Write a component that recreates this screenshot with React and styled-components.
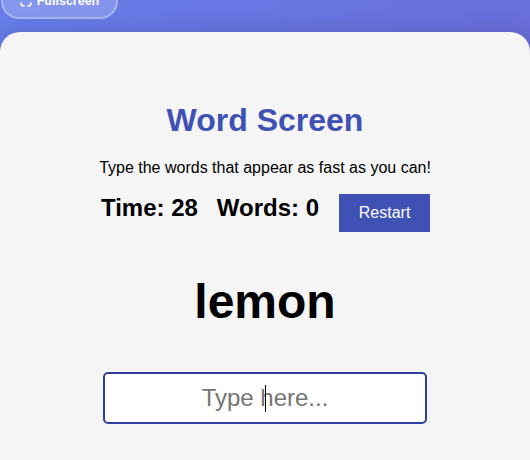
import React from 'react'
import styled, { createGlobalStyle } from 'styled-components'

const GlobalStyle = createGlobalStyle`
  html, body {
    margin: 0;
    padding: 0;
    height: 460px;
    overflow: hidden;
    font-family: "Liberation Sans", Arial, sans-serif;
  }
`

const Page = styled.div`
  width: 530px;
  height: 460px;
  overflow: hidden;
  display: flex;
  flex-direction: column;
  background: linear-gradient(135deg, #667eea 0%, #6a70dc 53%, #6e62cc 100%);
`

const TopBar = styled.div`
  height: 32px;
  flex-shrink: 0;
  overflow: hidden;
  display: flex;
  align-items: flex-end;
  padding: 0 0 13px 1px;
  box-sizing: border-box;
`

const FullscreenButton = styled.button`
  flex-shrink: 0;
  width: 117px;
  height: 36px;
  display: flex;
  align-items: center;
  justify-content: center;
  gap: 5px;
  padding: 0;
  background: rgba(255, 255, 255, 0.2);
  border: 2px solid rgba(255, 255, 255, 0.3);
  border-radius: 20px;
  color: #fff;
  font-family: inherit;
  font-size: 12.5px;
  font-weight: 700;
`

const Card = styled.main`
  flex: 1;
  background: #f5f5f5;
  border-radius: 20px 20px 0 0;
  box-shadow: 0 -4px 20px rgba(0, 0, 0, 0.12);
  display: flex;
  flex-direction: column;
  align-items: center;
  padding-top: 70px;
`

const Title = styled.h1`
  margin: 0;
  font-size: 32px;
  line-height: 37px;
  font-weight: 700;
  color: #3f51b5;
`

const Subtitle = styled.p`
  margin: 20px 0 0;
  font-size: 16px;
  line-height: 18px;
  color: #000;
`

const StatsRow = styled.div`
  display: flex;
  align-items: flex-start;
  margin-top: 17px;
  margin-left: 1px;
`

const Stat = styled.span`
  font-size: 24px;
  line-height: 28px;
  font-weight: 700;
  color: #000;
  margin-right: ${props => props.$gap}px;
`

const RestartButton = styled.button`
  width: 91px;
  height: 38px;
  background: #3f51b5;
  border: none;
  color: #fff;
  font-family: inherit;
  font-size: 16px;
  padding: 0;
`

const Word = styled.div`
  margin-top: 42px;
  font-size: 48px;
  line-height: 55px;
  font-weight: 700;
  color: #000;
`

const InputWrap = styled.div`
  position: relative;
  margin-top: 43px;
  width: 324px;
  height: 52px;
`

const WordInput = styled.input`
  width: 100%;
  height: 100%;
  box-sizing: border-box;
  background: #fff;
  border: 2px solid #303f9f;
  border-radius: 5px;
  font-family: inherit;
  font-size: 24px;
  text-align: center;
  outline: none;
  caret-color: transparent;
`

const Caret = styled.span`
  position: absolute;
  left: 162px;
  top: 13px;
  width: 1px;
  height: 27px;
  background: #000;
`

function ExpandIcon() {
  return (
    <svg width="12" height="12" viewBox="0 0 12 12" fill="none" stroke="currentColor" strokeWidth="1.6" strokeLinecap="round">
      <path d="M1 4 A3 3 0 0 1 4 1" />
      <path d="M8 1 A3 3 0 0 1 11 4" />
      <path d="M11 8 A3 3 0 0 1 8 11" />
      <path d="M4 11 A3 3 0 0 1 1 8" />
    </svg>
  )
}

export default function App() {
  return (
    <Page>
      <GlobalStyle />
      <TopBar>
        <FullscreenButton>
          <ExpandIcon />
          Fullscreen
        </FullscreenButton>
      </TopBar>
      <Card>
        <Title>Word Screen</Title>
        <Subtitle>Type the words that appear as fast as you can!</Subtitle>
        <StatsRow>
          <Stat $gap={19}>Time: 28</Stat>
          <Stat $gap={20}>Words: 0</Stat>
          <RestartButton>Restart</RestartButton>
        </StatsRow>
        <Word>lemon</Word>
        <InputWrap>
          <WordInput placeholder="Type here..." readOnly />
          <Caret />
        </InputWrap>
      </Card>
    </Page>
  )
}
